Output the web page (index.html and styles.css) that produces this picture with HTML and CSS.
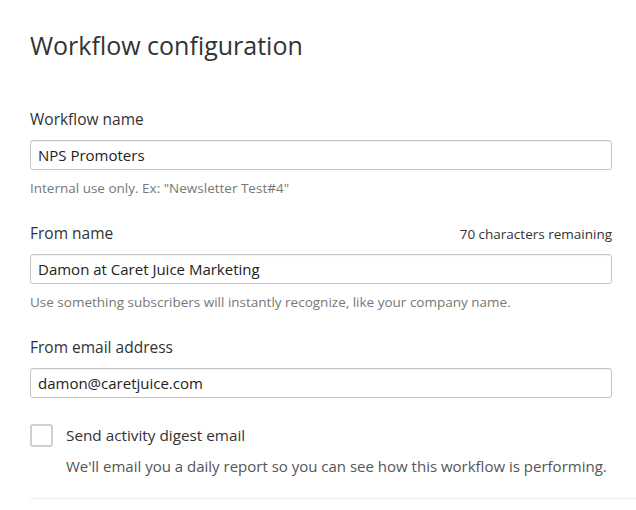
FILE: index.html
```html
<!DOCTYPE html>
<html>
<head>
<meta charset="utf-8">
<link rel="stylesheet" href="styles.css">
</head>
<body>
<div class="page">
  <h1 class="title">Workflow configuration</h1>
  <div class="field first">
    <div class="label-row"><label class="label">Workflow name</label></div>
    <div class="input">NPS Promoters</div>
    <div class="help">Internal use only. Ex: "Newsletter Test#4"</div>
  </div>
  <div class="field">
    <div class="label-row"><label class="label">From name</label><span class="counter">70 characters remaining</span></div>
    <div class="input">Damon at Caret Juice Marketing</div>
    <div class="help">Use something subscribers will instantly recognize, like your company name.</div>
  </div>
  <div class="field">
    <div class="label-row"><label class="label">From email address</label></div>
    <div class="input">damon@caretjuice.com</div>
  </div>
  <div class="check">
    <span class="box"></span>
    <div class="check-text">
      <div class="check-label">Send activity digest email</div>
      <div class="check-desc">We'll email you a daily report so you can see how this workflow is performing.</div>
    </div>
  </div>
  <div class="divider"></div>
</div>
</body>
</html>
```
FILE: styles.css
```css
html, body {
  margin: 0;
  padding: 0;
  background: #fff;
}
body {
  font-family: "Open Sans", "DejaVu Sans", sans-serif;
  color: #333;
}
.page {
  padding: 30px 0 0 30px;
}
.title {
  margin: 0;
  font-size: 25px;
  line-height: 30px;
  font-weight: 400;
  color: #333;
}
.field {
  width: 582px;
  margin-top: 26px;
}
.field.first {
  margin-top: 49px;
}
.label-row {
  display: flex;
  justify-content: space-between;
  align-items: baseline;
  height: 20px;
}
.label {
  font-size: 15.5px;
  line-height: 20px;
  color: #333;
}
.counter {
  font-size: 13.5px;
  line-height: 20px;
  color: #333;
}
.input {
  box-sizing: border-box;
  margin-top: 11px;
  height: 30px;
  border: 1px solid #c4c4c4;
  border-radius: 3px;
  box-shadow: inset 0 1px 1px rgba(0,0,0,0.06);
  padding: 0 7px;
  font-size: 15px;
  line-height: 28px;
  color: #222;
}
.help {
  margin-top: 9px;
  font-size: 13.5px;
  line-height: 18px;
  color: #777;
}
.check {
  display: flex;
  margin-top: 26px;
  gap: 13px;
}
.box {
  box-sizing: border-box;
  width: 23px;
  height: 23px;
  border: 2px solid #d0d0d0;
  border-radius: 3px;
  flex: none;
}
.check-label {
  font-size: 15.3px;
  line-height: 22px;
  color: #333;
}
.check-desc {
  margin-top: 10px;
  font-size: 15px;
  line-height: 20px;
  color: #555;
}
.divider {
  margin-top: 22px;
  border-top: 1px solid #eee;
}
```
